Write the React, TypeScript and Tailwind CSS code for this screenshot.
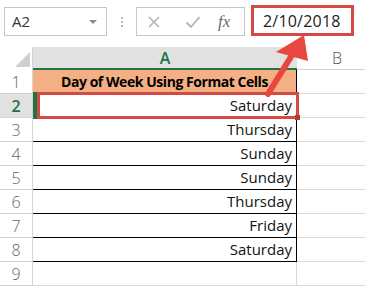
import React from "react";

const ui = { fontFamily: '"Open Sans", "Noto Sans", sans-serif' };

const days = ["Thursday", "Sunday", "Sunday", "Thursday", "Friday", "Saturday"];

const RowHead: React.FC<{ n: number; active?: boolean }> = ({ n, active }) => (
  <div
    className={
      "w-[33px] shrink-0 flex items-center justify-center border-r border-b border-[#d4d4d4] text-[16px] " +
      (active ? "bg-[#e1e1e1] text-[#217346] font-semibold" : "bg-white text-[#666666] font-light")
    }
  >
    {n}
  </div>
);

const BCell: React.FC = () => <div className="w-[80px] shrink-0 border-b border-r border-[#d9d9d9]" />;

const App: React.FC = () => {
  return (
    <div className="relative w-[365px] h-[287px] overflow-hidden bg-white" style={ui}>
      {/* formula bar */}
      <div className="flex items-center h-[47px] pb-[4px]">
        <div className="ml-[4px] w-[103px] h-[29px] border border-[#c6c6c6] flex items-center justify-between pl-[7px] pr-[9px]">
          <span className="text-[15px] text-[#333333]">A2</span>
          <span className="w-0 h-0 border-l-[4px] border-r-[4px] border-t-[4px] border-l-transparent border-r-transparent border-t-[#8a8a8a]" />
        </div>
        <div className="ml-[14px] flex flex-col gap-[2px]">
          <span className="w-[2px] h-[2px] bg-[#b8b8b8]" />
          <span className="w-[2px] h-[2px] bg-[#b8b8b8]" />
          <span className="w-[2px] h-[2px] bg-[#b8b8b8]" />
        </div>
        <div className="ml-[13px] w-[109px] h-[29px] border border-[#c6c6c6] flex items-center">
          <svg width="14" height="14" viewBox="0 0 14 14" className="ml-[10px]">
            <path d="M2 2 L12 12 M12 2 L2 12" stroke="#b3b3b3" strokeWidth="1.6" />
          </svg>
          <svg width="16" height="14" viewBox="0 0 16 14" className="ml-[24px]">
            <path d="M1.5 7.5 L6 12 L14.5 2" stroke="#b3b3b3" strokeWidth="1.8" fill="none" />
          </svg>
          <span
            className="ml-[17px] text-[17px] italic text-[#6b6b6b]"
            style={{ fontFamily: '"Liberation Serif", serif' }}
          >
            fx
          </span>
        </div>
        <div className="ml-[6px] w-[103px] h-[31px] -mt-[2px] border-[3px] border-[#d24a43] flex items-center pl-[9px]">
          <span className="text-[16px] text-[#222222] tracking-[0.2px]">2/10/2018</span>
        </div>
      </div>

      {/* column headers */}
      <div className="flex h-[23px]">
        <div className="w-[33px] shrink-0 relative border-r border-[#d4d4d4]">
          <svg width="33" height="23" className="absolute left-0 top-0">
            <polygon points="15,20 30,20 30,5" fill="#cfcfcf" />
          </svg>
        </div>
        <div className="w-[264px] shrink-0 bg-[#e1e1e1] border-b-2 border-[#217346] flex items-center justify-center text-[16px] font-semibold text-[#217346]">
          A
        </div>
        <div className="w-[80px] shrink-0 border-b border-[#d4d4d4] flex items-center justify-center text-[16px] font-light text-[#555555]">
          B
        </div>
      </div>

      {/* row 1 */}
      <div className="flex h-[24px]">
        <RowHead n={1} />
        <div className="w-[264px] shrink-0 bg-[#f4b084] border-r border-b border-black flex items-center justify-center text-[14px] font-bold text-black tracking-[-0.45px]">
          Day of Week Using Format Cells
        </div>
        <BCell />
      </div>

      {/* row 2 (active) */}
      <div className="flex h-[24px] relative">
        <RowHead n={2} active />
        <div className="w-[264px] shrink-0 border-r border-b border-black flex items-center justify-end pr-[4px] text-[15px] text-[#111111]">
          Saturday
        </div>
        <BCell />
        <div className="absolute left-[33px] top-[-2px] w-[4px] h-[27px] bg-[#217346]" />
        <div className="absolute left-[37px] top-[-2px] w-[262px] h-[27px] border-[3px] border-[#d24a43]" />
        <div className="absolute left-[295px] top-[21px] w-[5px] h-[5px] bg-[#b43a34]" />
      </div>

      {days.map((d, i) => (
        <div key={i} className="flex h-[24px]">
          <RowHead n={i + 3} />
          <div className="w-[264px] shrink-0 border-r border-b border-black flex items-center justify-end pr-[4px] text-[15px] text-[#111111]">
            {d}
          </div>
          <BCell />
        </div>
      ))}

      {/* row 9 */}
      <div className="flex h-[24px]">
        <RowHead n={9} />
        <div className="w-[264px] shrink-0 border-r border-b border-[#d9d9d9]" />
        <BCell />
      </div>

      {/* annotation arrow */}
      <svg width="365" height="287" className="absolute left-0 top-0 pointer-events-none">
        <line x1="268" y1="94" x2="292" y2="55" stroke="#e8473f" strokeWidth="6" strokeLinecap="round" />
        <polygon points="304,35 308,61 276,52" fill="#e8473f" />
      </svg>
    </div>
  );
};

export default App;
